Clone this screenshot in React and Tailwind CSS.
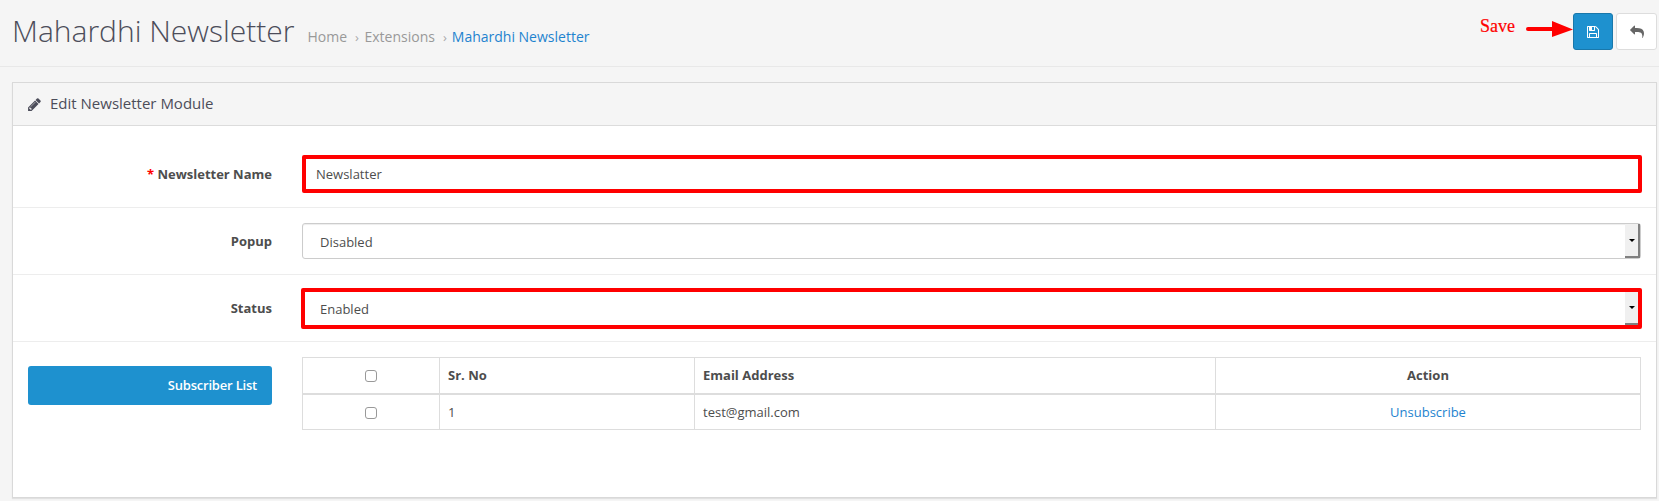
import React from "react";

function PencilIcon() {
  return (
    <svg viewBox="0 0 1792 1792" className="h-[15px] w-[15px] shrink-0 fill-[#4c4d5a]">
      <path d="M491 1536l91-91-235-235-91 91v107h128v128h107zm523-928q0-22-22-22-10 0-17 7l-542 542q-7 7-7 17 0 22 22 22 10 0 17-7l542-542q7-7 7-17zm-54-192l416 416-832 832h-416v-416zm683 96q0 53-37 90l-166 166-416-416 166-165q36-38 90-38 53 0 91 38l235 234q37 39 37 91z" />
    </svg>
  );
}

function FloppyIcon() {
  return (
    <svg viewBox="0 0 1792 1792" className="h-[14px] w-[14px] fill-white">
      <path d="M512 1536h768v-384h-768v384zm896 0h128v-896q0-14-10-38.5t-20-34.5l-281-281q-10-10-34-20t-39-10v416q0 40-28 68t-68 28h-576q-40 0-68-28t-28-68v-416h-128v1280h128v-416q0-40 28-68t68-28h832q40 0 68 28t28 68v416zm-384-928v-320q0-13-9.5-22.5t-22.5-9.5h-192q-13 0-22.5 9.5t-9.5 22.5v320q0 13 9.5 22.5t22.5 9.5h192q13 0 22.5-9.5t9.5-22.5zm640 32v928q0 40-28 68t-68 28h-1344q-40 0-68-28t-28-68v-1344q0-40 28-68t68-28h928q40 0 88 20t76 48l280 280q28 28 48 76t20 88z" />
    </svg>
  );
}

function ReplyIcon() {
  return (
    <svg viewBox="0 0 1792 1792" className="h-[14px] w-[14px] -scale-x-100 fill-[#666666]">
      <path d="M1792 640q0 26-19 45l-512 512q-19 19-45 19t-45-19-19-45v-256h-224q-98 0-175.5 6t-154 21.5-133 42.5-105.5 69.5-80 101-48.5 138.5-17.5 181q0 55 5 123 0 6 2.5 23.5t2.5 26.5q0 15-8.5 25t-23.5 10q-16 0-28-17-7-9-13-22t-13.5-30-10.5-24q-127-285-127-451 0-199 53-333 162-403 875-403h224v-256q0-26 19-45t45-19 45 19l512 512q19 19 19 45z" />
    </svg>
  );
}

function Arrow() {
  return (
    <svg viewBox="0 0 47 16" className="mt-[21px] h-4 w-[47px]">
      <path d="M2 8H30" stroke="#ff0000" strokeWidth="4" strokeLinecap="round" />
      <path d="M26 0L47 8.5L26 16Z" fill="#ff0000" />
    </svg>
  );
}

function DropButton({ className }) {
  return (
    <div className={`flex items-center justify-center bg-[#f0f0f0] ${className}`}>
      <svg viewBox="0 0 6 3" className="h-[3px] w-[6px]">
        <path d="M0 0H6L3 3Z" fill="#000" />
      </svg>
    </div>
  );
}

function Label({ required, children }) {
  return (
    <div className="w-[259px] shrink-0 text-right font-bold leading-5">
      {required && <span className="text-[#ff0000]">* </span>}
      {children}
    </div>
  );
}

function Box() {
  return <div className="mx-auto h-3 w-3 rounded-[3px] border border-[#999999] bg-white" />;
}

export default function App() {
  return (
    <div className="h-[501px] w-[1659px] overflow-hidden bg-[#f5f5f5] font-['Open_Sans',sans-serif] text-[13px] text-[#4d4d4d]">
      <header className="flex h-[67px] items-start border-b border-[#e8e8e8] pl-3 pr-0.5">
        <div className="flex items-baseline pt-[10px]">
          <h1 className="text-[30px] font-light leading-[42px] text-[#4c4d5a]">Mahardhi Newsletter</h1>
          <nav className="ml-[13px] flex items-baseline whitespace-pre text-[14px] text-[#999999]">
            <span>Home</span>
            <span className="ml-2 mr-[5.5px] text-[13px] text-[#aaaaaa]">›</span>
            <span>Extensions</span>
            <span className="ml-2 mr-[5px] text-[13px] text-[#aaaaaa]">›</span>
            <span className="text-[#1e83cf]">Mahardhi Newsletter</span>
          </nav>
        </div>
        <div className="ml-auto flex items-start">
          <span className="mr-[11px] mt-4 font-['Liberation_Serif',serif] text-[18px] leading-5 text-[#ff0000] [-webkit-text-stroke:0.2px_#ff0000]">Save</span>
          <Arrow />
          <button className="mt-[13px] flex h-[37px] w-10 items-center justify-center rounded-[3px] border border-[#1978ab] bg-[#1e91cf]">
            <FloppyIcon />
          </button>
          <button className="ml-[3px] mt-[13px] flex h-[37px] w-[41px] items-center justify-center rounded-[3px] border border-[#dddddd] bg-white">
            <ReplyIcon />
          </button>
        </div>
      </header>

      <section className="ml-3 mt-[15px] h-[416px] w-[1645px] border border-[#d9d9d9] bg-white shadow-[0_1px_1px_rgba(0,0,0,0.08)]">
        <div className="flex h-[43px] items-center border-b border-[#dcdcdc] bg-[#f5f5f5] pl-[14px]">
          <PencilIcon />
          <h2 className="ml-2 pb-[2px] text-[15px] text-[#4c4d5a]">Edit Newsletter Module</h2>
        </div>

        <div className="flex h-[82px] items-start border-b border-[#ededed] pt-[29px]">
          <div className="pt-[9px]">
            <Label required>Newsletter Name</Label>
          </div>
          <div className="ml-[30px] flex h-[38px] w-[1340px] items-center rounded-[2px] border-4 border-[#ff0000] pl-[10px] pt-[2px]">
            Newslatter
          </div>
        </div>

        <div className="flex h-[67px] items-start border-b border-[#ededed] pt-[15px]">
          <div className="pt-[8px]">
            <Label>Popup</Label>
          </div>
          <div className="ml-[30px] flex h-9 w-[1339px] items-stretch justify-between rounded-[3px] border border-[#cccccc] pl-[17px] shadow-[inset_0_1px_1px_rgba(0,0,0,0.075)]">
            <span className="self-center pt-[3px]">Disabled</span>
            <DropButton className="w-[15px] border-b-2 border-r-2 border-[#808080]" />
          </div>
        </div>

        <div className="flex h-[67px] items-start border-b border-[#ededed] pt-[13px]">
          <div className="pt-[10px]">
            <Label>Status</Label>
          </div>
          <div className="ml-[29px] flex h-[41px] w-[1341px] items-stretch justify-between rounded-[2px] border-4 border-[#ff0000] pl-[15px]">
            <span className="self-center pt-[2px]">Enabled</span>
            <DropButton className="w-[13px] border-b-2 border-[#808080]" />
          </div>
        </div>

        <div className="flex items-start pl-[15px] pt-[15px]">
          <button className="mt-[9px] h-[39px] w-[244px] rounded-[3px] bg-[#1e91cf] pr-[15px] text-right font-semibold tracking-[-0.2px] text-white">
            Subscriber List
          </button>
          <div className="ml-[30px] grid w-[1339px] grid-cols-[137px_255px_521px_425px] border-l border-t border-[#dddddd] *:flex *:items-center *:border-r *:border-[#dddddd]">
            <div className="h-[37px] border-b-2"><Box /></div>
            <div className="h-[37px] border-b-2 pl-2 font-bold">Sr. No</div>
            <div className="h-[37px] border-b-2 pl-2 font-bold">Email Address</div>
            <div className="h-[37px] justify-center border-b-2 font-bold">Action</div>
            <div className="h-[35px] border-b pt-[2px]"><Box /></div>
            <div className="h-[35px] border-b pl-2 pt-[2px]">1</div>
            <div className="h-[35px] border-b pl-2 pt-[2px]">test@gmail.com</div>
            <div className="h-[35px] justify-center border-b pt-[2px] text-[#1e83cf]">Unsubscribe</div>
          </div>
        </div>
      </section>
    </div>
  );
}
